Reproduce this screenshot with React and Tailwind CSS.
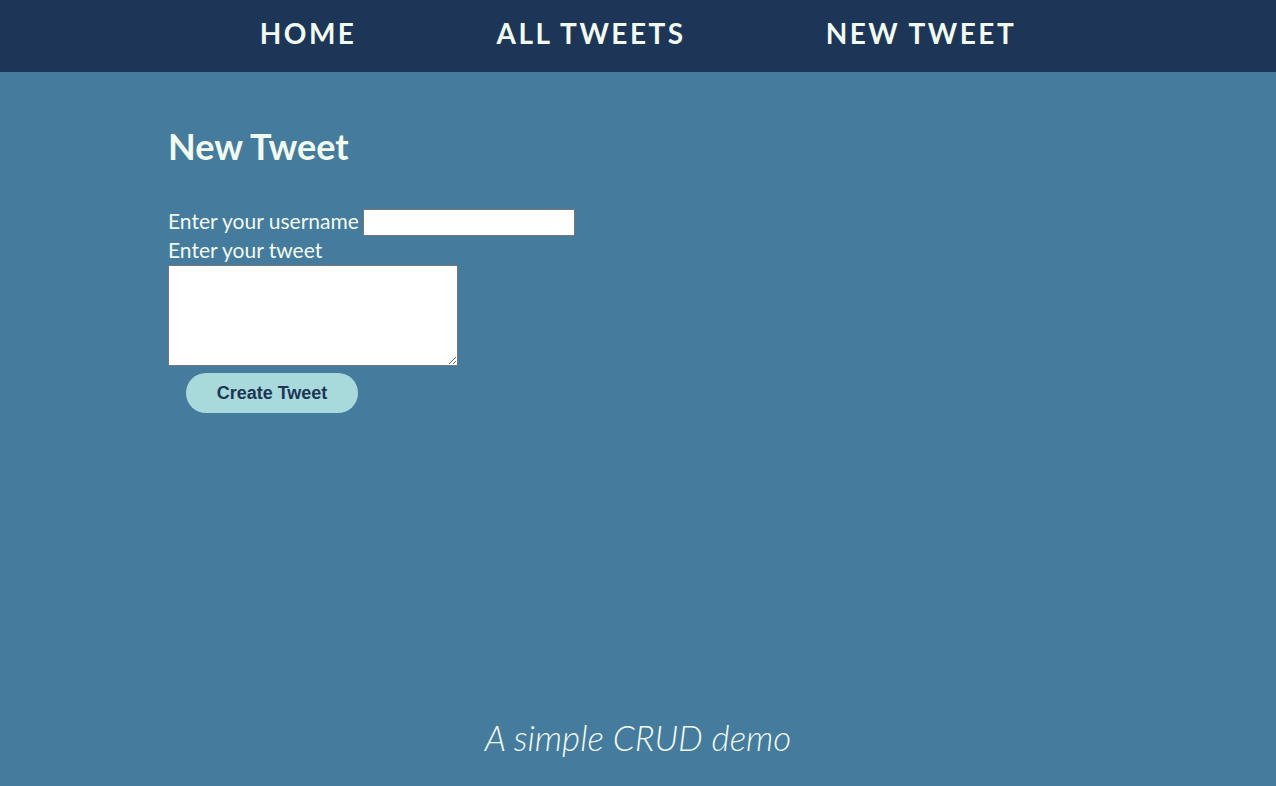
import React from 'react';

export default function App() {
    return (
        <div className="min-h-screen flex flex-col bg-[#457b9d] text-[#f1faee]" style={{ fontFamily: 'Lato, "Open Sans", sans-serif' }}>
            {/* Nav */}
            <nav className="h-[72px] bg-[#1d3557] flex items-center justify-center gap-[140px] pb-[7px]">
                <a className="text-[28px] font-bold tracking-[2.5px]">HOME</a>
                <a className="text-[28px] font-bold tracking-[2.5px]">ALL TWEETS</a>
                <a className="text-[28px] font-bold tracking-[2.5px]">NEW TWEET</a>
            </nav>

            <main className="flex-1 pl-[168px] pt-[51px]">
                <h2 className="text-[36px] font-bold leading-[46px]">New Tweet</h2>

                <form className="mt-[36px] text-[21px]">
                    <div className="flex items-start h-[30px] pt-[2px]">
                        <label className="leading-[28px]">Enter your username</label>
                        <input type="text" className="ml-[4px] mt-[2px] w-[212px] h-[27px] bg-white border border-[#767676]" />
                    </div>
                    <div className="leading-[30px]">
                        <label>Enter your tweet</label>
                    </div>
                    <textarea className="block w-[290px] h-[101px] bg-white border border-[#767676]" />
                    <button type="button" className="mt-[7px] ml-[18px] w-[172px] h-[40px] rounded-full bg-[#a8dadc] text-[#1d3557] text-[18px] font-bold" style={{ fontFamily: '"Liberation Sans", Arial, sans-serif' }}>
                        Create Tweet
                    </button>
                </form>
            </main>

            <footer className="h-[78px] flex items-start justify-center">
                <p className="text-[35px] font-light italic leading-[44px] pt-[7px]">A simple CRUD demo</p>
            </footer>
        </div>
    );
}
